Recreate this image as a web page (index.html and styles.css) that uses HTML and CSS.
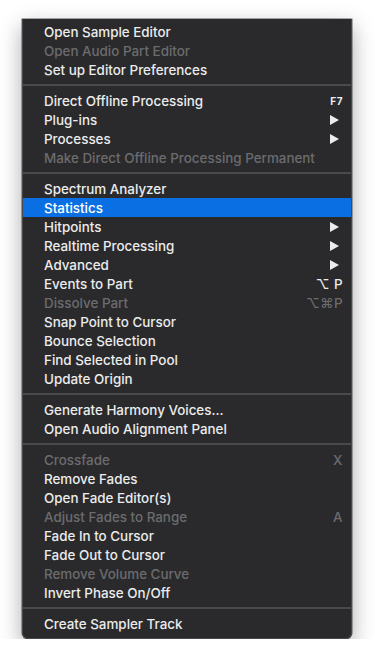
FILE: index.html
```html
<!DOCTYPE html>
<html lang="en">
<head>
  <meta charset="UTF-8" />
  <meta name="viewport" content="width=device-width, initial-scale=1.0"/>
  <title>Audio Menu</title>
  <link rel="stylesheet" href="styles.css">
</head>
<body>
  <div class="menu">
    <div class="item">Open Sample Editor</div>
    <div class="item off">Open Audio Part Editor</div>
    <div class="item">Set up Editor Preferences</div>
    <div class="sep"></div>

    <div class="item">Direct Offline Processing <span class="key small">F7</span></div>
    <div class="item">Plug-ins <svg class="arrow" viewBox="0 0 9 10"><polygon points="0,0 9,5 0,10"/></svg></div>
    <div class="item">Processes <svg class="arrow" viewBox="0 0 9 10"><polygon points="0,0 9,5 0,10"/></svg></div>
    <div class="item off">Make Direct Offline Processing Permanent</div>
    <div class="sep"></div>

    <div class="item">Spectrum Analyzer</div>
    <div class="item active">Statistics</div>
    <div class="item">Hitpoints <svg class="arrow" viewBox="0 0 9 10"><polygon points="0,0 9,5 0,10"/></svg></div>
    <div class="item">Realtime Processing <svg class="arrow" viewBox="0 0 9 10"><polygon points="0,0 9,5 0,10"/></svg></div>
    <div class="item">Advanced <svg class="arrow" viewBox="0 0 9 10"><polygon points="0,0 9,5 0,10"/></svg></div>
    <div class="item">Events to Part <span class="key">⌥ P</span></div>
    <div class="item off">Dissolve Part <span class="key">⌥⌘P</span></div>
    <div class="item">Snap Point to Cursor</div>
    <div class="item">Bounce Selection</div>
    <div class="item">Find Selected in Pool</div>
    <div class="item">Update Origin</div>
    <div class="sep"></div>

    <div class="item">Generate Harmony Voices...</div>
    <div class="item">Open Audio Alignment Panel</div>
    <div class="sep"></div>

    <div class="item off">Crossfade <span class="key">X</span></div>
    <div class="item">Remove Fades</div>
    <div class="item">Open Fade Editor(s)</div>
    <div class="item off">Adjust Fades to Range <span class="key">A</span></div>
    <div class="item">Fade In to Cursor</div>
    <div class="item">Fade Out to Cursor</div>
    <div class="item off">Remove Volume Curve</div>
    <div class="item">Invert Phase On/Off</div>
    <div class="sep"></div>

    <div class="item">Create Sampler Track</div>
  </div>
</body>
</html>
```

FILE: styles.css
```css
body {
  margin: 0;
  background-color: #ffffff;
  font-family: Inter, "Noto Sans", sans-serif;
}
.menu {
  width: 328px;
  margin: 19px 0 0 22px;
  padding: 3px 0 5px;
  background-color: #2a2a2c;
  border: 1px solid #48484a;
  border-top: none;
  border-radius: 0 0 6px 6px;
  box-shadow: 0 8px 22px rgba(0,0,0,0.35), 0 0 0 0.5px rgba(0,0,0,0.6);
}
.item {
  display: flex;
  align-items: center;
  justify-content: space-between;
  height: 19px;
  padding: 0 11px 0 21px;
  font-size: 13.4px;
  font-weight: 500;
  color: #ececec;
  white-space: nowrap;
}
.item.off {
  color: #6c6c6e;
}
.item.active {
  background-color: #0b6fe4;
  color: #ffffff;
}
.key {
  margin-right: -3px;
  font-size: 13.4px;
  letter-spacing: 0.5px;
}
.key.small {
  font-size: 10px;
  font-weight: 700;
}
.arrow {
  width: 9px;
  height: 10px;
  margin-right: 1px;
  fill: #ececec;
}
.sep {
  height: 2px;
  margin: 5px 0;
  background-color: #4a4a4c;
}
```
